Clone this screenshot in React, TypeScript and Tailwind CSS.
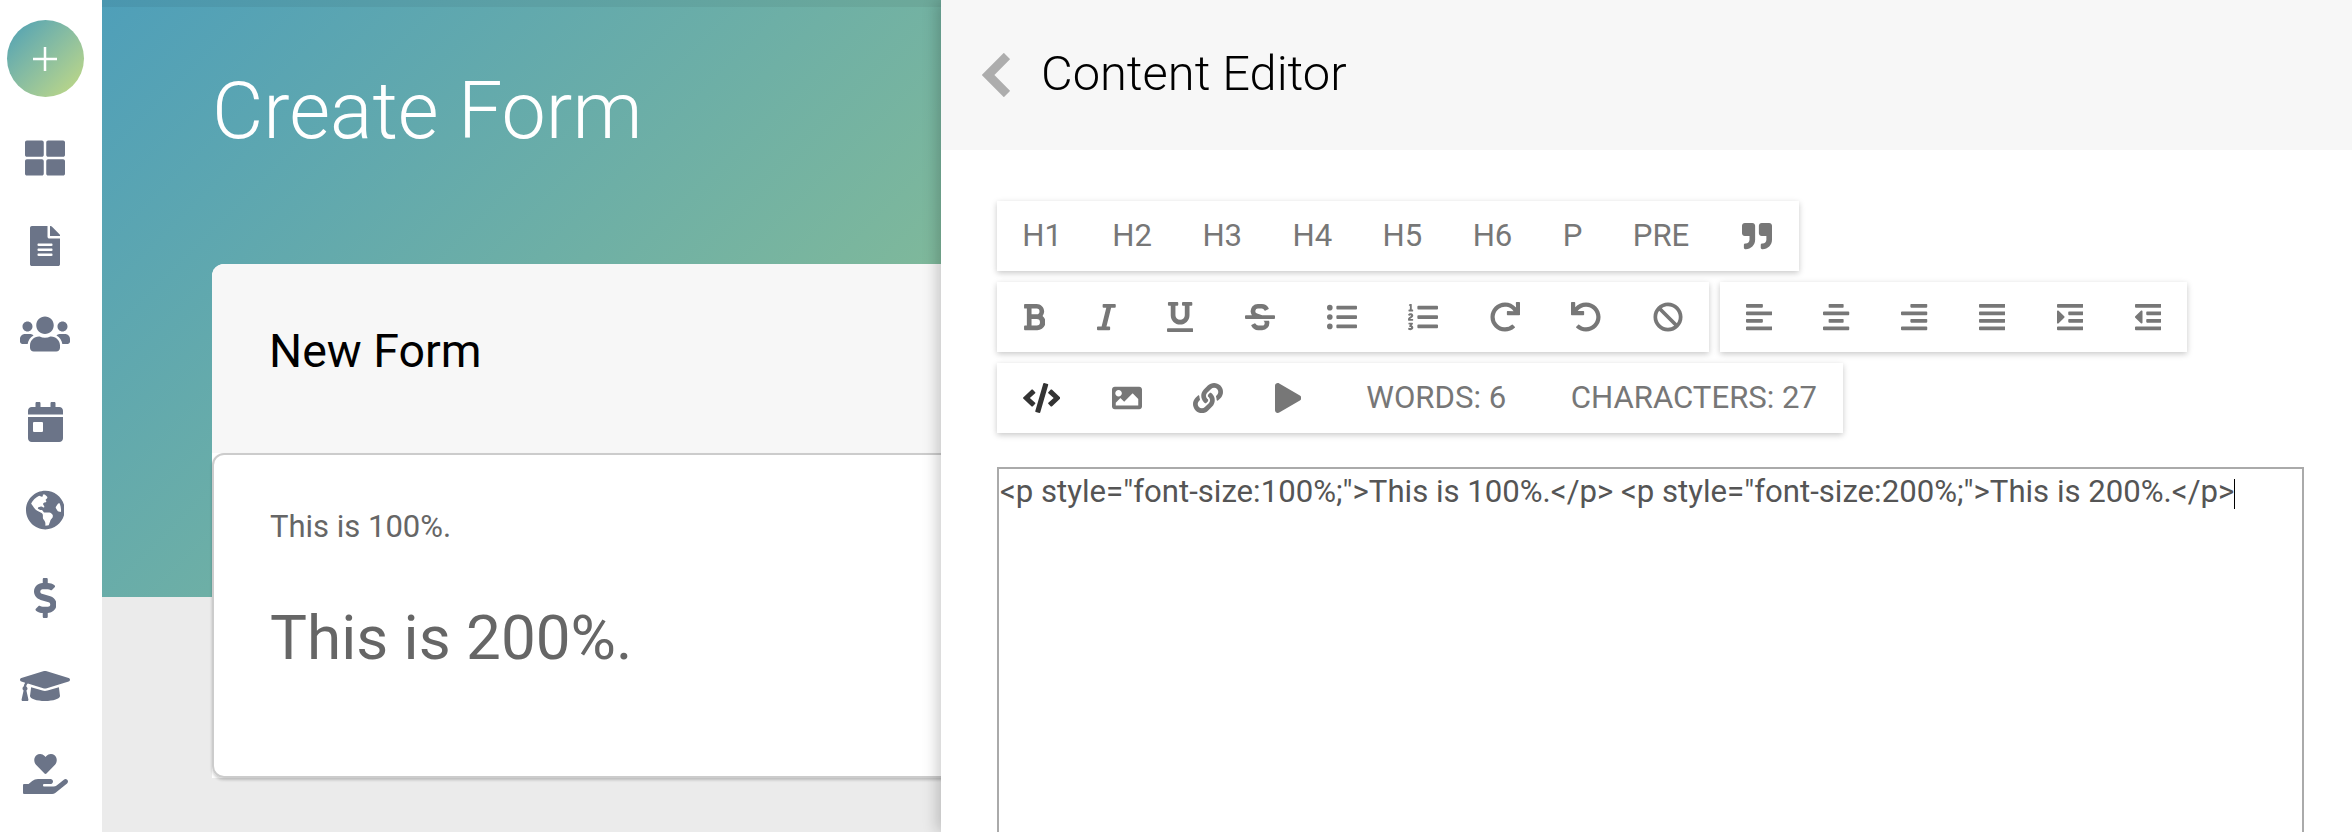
import * as React from "react";
import {
  FaThLarge, FaFileAlt, FaUsers, FaCalendarDay, FaGlobeAmericas, FaDollarSign, FaGraduationCap, FaHandHoldingHeart,
  FaQuoteRight, FaBold, FaItalic, FaUnderline, FaStrikethrough, FaListUl, FaListOl, FaRedo, FaUndo, FaBan,
  FaAlignLeft, FaAlignCenter, FaAlignRight, FaAlignJustify, FaIndent, FaOutdent, FaCode, FaImage, FaLink, FaPlay,
} from "react-icons/fa";

type Item = { icon: React.ElementType; w: string };

// widths follow each glyph's own viewBox, the icons are not square
const navIcons: Item[] = [
  { icon: FaThLarge, w: "w-[40px]" },
  { icon: FaFileAlt, w: "w-[30px]" },
  { icon: FaUsers, w: "w-[50px]" },
  { icon: FaCalendarDay, w: "w-[35px]" },
  { icon: FaGlobeAmericas, w: "w-[38.75px]" },
  { icon: FaDollarSign, w: "w-[22.5px]" },
  { icon: FaGraduationCap, w: "w-[50px]" },
  { icon: FaHandHoldingHeart, w: "w-[45px]" },
];
const headings = ["H1", "H2", "H3", "H4", "H5", "H6", "P", "PRE"];
const formatIcons: Item[] = [
  { icon: FaBold, w: "w-[22.5px]" },
  { icon: FaItalic, w: "w-[18.75px]" },
  { icon: FaUnderline, w: "w-[26.25px]" },
  { icon: FaStrikethrough, w: "w-[30px]" },
  { icon: FaListUl, w: "w-[30px]" },
  { icon: FaListOl, w: "w-[30px]" },
  { icon: FaRedo, w: "w-[30px]" },
  { icon: FaUndo, w: "w-[30px]" },
  { icon: FaBan, w: "w-[30px]" },
];
const alignIcons = [FaAlignLeft, FaAlignCenter, FaAlignRight, FaAlignJustify, FaIndent, FaOutdent];
const mediaIcons: Item[] = [
  { icon: FaImage, w: "w-[30px]" },
  { icon: FaLink, w: "w-[30px]" },
  { icon: FaPlay, w: "w-[26.25px]" },
];

function ToolGroup({ children }: { children: React.ReactNode }) {
  return <div className="flex items-center h-[70px] bg-white shadow-[0_2px_6px_rgba(0,0,0,0.22)]">{children}</div>;
}

function ToolIcon({ icon: Icon, w, dark }: Item & { dark?: boolean }) {
  return (
    <button className={`flex items-center justify-center px-[25.8px] h-full ${dark ? "text-[#333333]" : "text-[#777777]"}`}>
      <Icon size={30} className={w} />
    </button>
  );
}

function ToolText({ label }: { label: string }) {
  return <span className="px-[25.2px] text-[31.15px] leading-none text-[#777777]">{label}</span>;
}

export default function App() {
  return (
    <div className="flex w-[2352px] h-[832px] overflow-hidden bg-white font-['Roboto',sans-serif]">
      {/* sidebar */}
      <nav className="flex flex-col items-center w-[102px] shrink-0 pt-5 pr-3 bg-white">
        <button className="flex items-center justify-center shrink-0 w-[77px] h-[77px] mb-[17px] rounded-full bg-gradient-to-br from-[#4a9fb5] to-[#c5db80]">
          <svg width="26" height="26" viewBox="0 0 26 26" stroke="white" strokeWidth="2.5">
            <path d="M13 1V25M1 13H25" />
          </svg>
        </button>
        {navIcons.map(({ icon: Icon, w }, i) => (
          <div key={i} className="flex items-center justify-center shrink-0 h-[88px] text-[#6b7488]">
            <Icon size={40} className={w} />
          </div>
        ))}
      </nav>

      {/* page behind the panel */}
      <main className="relative w-[839px] shrink-0 overflow-hidden bg-[#ebebeb]">
        <div className="absolute inset-x-0 top-0 h-[597px] bg-[linear-gradient(135deg,#4f9fb9,#8dc092)]">
          <div className="h-[7px] bg-black/5" />
        </div>
        <div className="relative pl-[110px]">
          <h1 className="pt-[66px] h-[264px] text-[79px] leading-[90px] font-light text-white">Create Form</h1>
          <div className="w-[900px] rounded-t-xl bg-white">
            <div className="flex items-center h-[189px] pl-[57px] pb-[14px] rounded-t-xl bg-[#f7f7f7] text-[46.5px] text-black">New Form</div>
            <div className="h-[325px] pl-[56px] pt-[50px] rounded-xl border-2 border-[#cccccc] text-[#666666] shadow-[0_2px_3px_rgba(0,0,0,0.2)]">
              <p className="text-[31px] leading-[44px]">This is 100%.</p>
              <p className="mt-[53px] text-[62px] leading-[72px]">This is 200%.</p>
            </div>
          </div>
        </div>
      </main>

      {/* content editor panel */}
      <section className="relative z-10 flex-1 bg-white shadow-[-4px_0_14px_rgba(0,0,0,0.2)]">
        <header className="flex items-center h-[150px] pl-[41px] gap-[31px] bg-[#f7f7f7]">
          <svg width="28" height="44" viewBox="0 0 28 44" fill="none" stroke="#adadad" strokeWidth="9">
            <path d="M25 3L6 22L25 41" />
          </svg>
          <h2 className="pb-[3px] text-[48.8px] font-light text-black">Content Editor</h2>
        </header>
        <div className="pl-[56px] pr-[48px] pt-[51px]">
          <div className="flex flex-col items-start gap-[11px]">
            <ToolGroup>
              {headings.map((h) => (
                <ToolText key={h} label={h} />
              ))}
              <div className="pl-[2px] pr-[1px]">
                <ToolIcon icon={FaQuoteRight} w="w-[30px]" />
              </div>
            </ToolGroup>
            <div className="flex gap-[11px]">
              <ToolGroup>
                {formatIcons.map((item, i) => (
                  <ToolIcon key={i} {...item} />
                ))}
              </ToolGroup>
              <ToolGroup>
                {alignIcons.map((Icon, i) => (
                  <ToolIcon key={i} icon={Icon} w="w-[26.25px]" />
                ))}
              </ToolGroup>
            </div>
            <ToolGroup>
              <ToolIcon icon={FaCode} w="w-[37.5px]" dark />
              {mediaIcons.map((item, i) => (
                <ToolIcon key={i} {...item} />
              ))}
              <div className="flex gap-[14px] ml-[14px] pr-[1px]">
                <ToolText label="WORDS: 6" />
                <ToolText label="CHARACTERS: 27" />
              </div>
            </ToolGroup>
          </div>
          <div className="mt-[34px] h-[420px] border-2 border-[#aaaaaa] px-[1px] pt-[7px] text-[31.15px] leading-[32px] text-[#555555] whitespace-nowrap">
            {'<p style="font-size:100%;">This is 100%.</p> <p style="font-size:200%;">This is 200%.</p>'}
            <span className="inline-block w-[1px] h-[30px] align-middle bg-black" />
          </div>
        </div>
      </section>
    </div>
  );
}
